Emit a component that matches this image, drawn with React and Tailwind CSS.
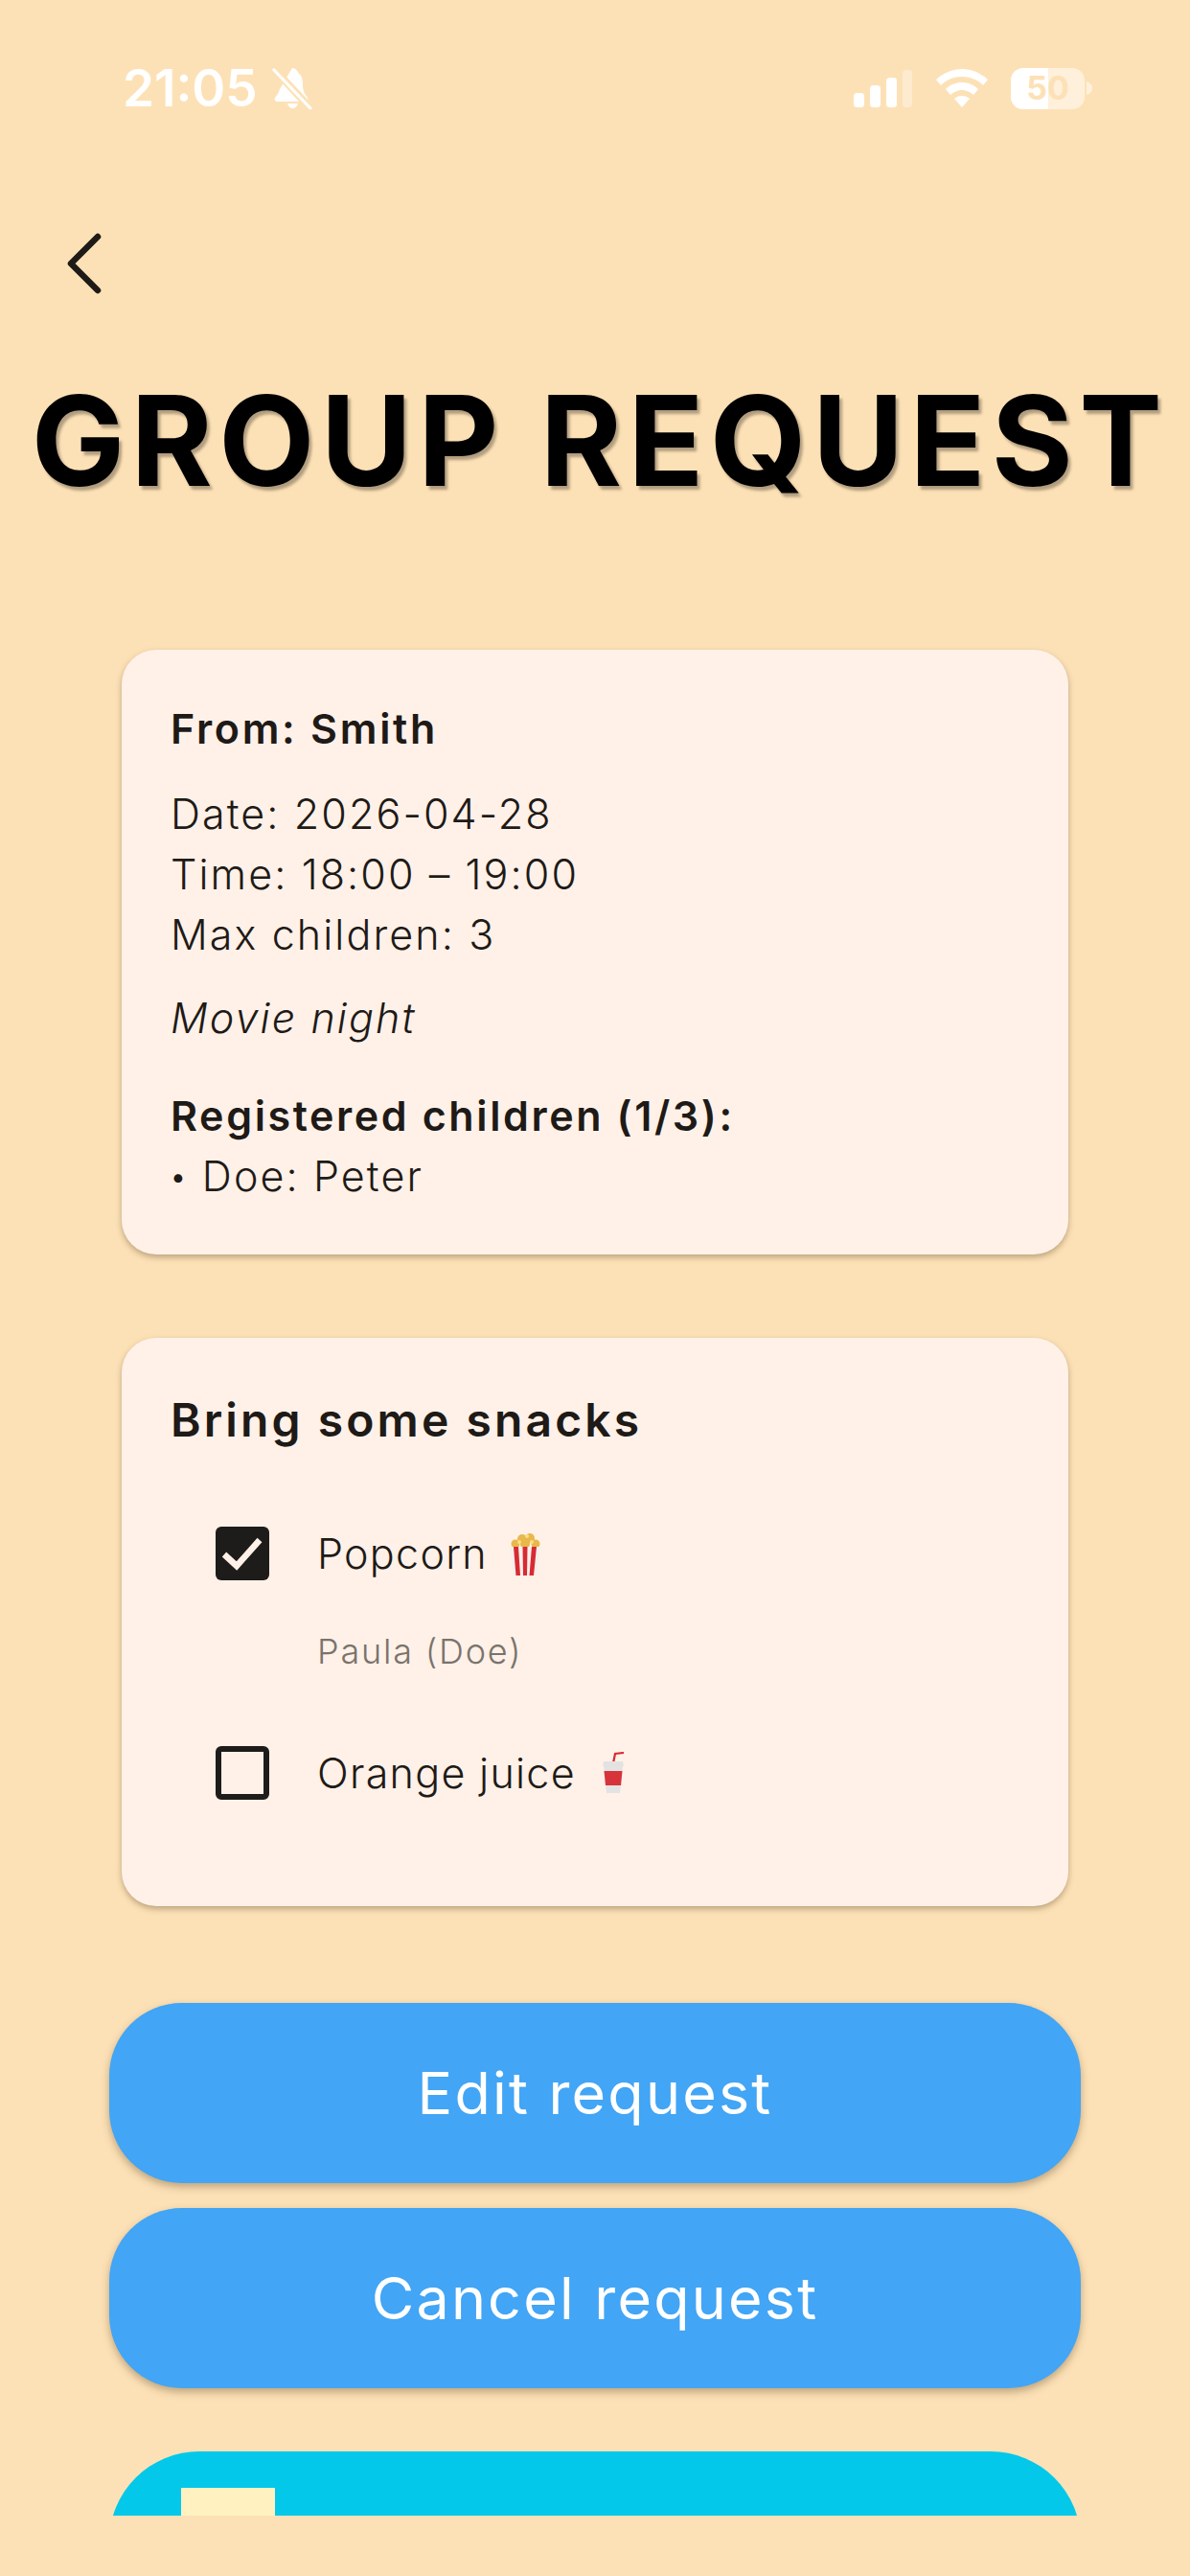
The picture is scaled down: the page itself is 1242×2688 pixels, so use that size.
const FONT = "font-['Inter','Noto_Sans',sans-serif]"

function BellOff() {
  return (
    <svg width="44" height="44" viewBox="0 0 44 44" className="ml-[14px]">
      <path fill="#fff" d="M22 1c3 0 6 3 7 6 3 2 4 6 4 11 0 6 1 9 5 14 1 2 0 4-2 4H7c-3 0-4-2-3-4 2-3 4-5 5-9z" />
      <path fill="#fff" d="M17 38h11c-1 3-3 5-5.500 5S18 41 17 38z" />
      <path stroke="#fde1b6" strokeWidth="8" d="M2 1l40 43" />
      <path stroke="#fff" strokeWidth="3.200" strokeLinecap="round" d="M3 3l38 40" />
    </svg>
  )
}

function Signal() {
  return (
    <svg width="62" height="39" viewBox="0 0 62 39">
      <rect x="0" y="24" width="11" height="15" rx="3.500" fill="#fff" />
      <rect x="17" y="16" width="11" height="23" rx="3.500" fill="#fff" />
      <rect x="34" y="8" width="11" height="31" rx="3.500" fill="#fff" />
      <rect x="51" y="0" width="10" height="39" rx="3.500" fill="#fff" fillOpacity="0.35" />
    </svg>
  )
}

function Wifi() {
  return (
    <svg width="54" height="40" viewBox="0 0 54 40" className="ml-[24px]">
      <path fill="#fff" d="M27 0c10 0 19 4 27 11l-5 6C43 11 35 8 27 8S11 11 5 17l-5-6C8 4 17 0 27 0z" />
      <path fill="#fff" d="M27 14c6 0 12 2 17 7l-5 6c-3-3-8-5-12-5s-9 2-12 5l-5-6c5-5 11-7 17-7z" />
      <path fill="#fff" d="M27 28c3 0 6 1 8 3l-8 9-8-9c2-2 5-3 8-3z" />
    </svg>
  )
}

function Battery() {
  return (
    <div className="ml-[24px] flex items-center">
      <div className="relative w-[77px] h-[43px] rounded-[13px] overflow-hidden bg-white/50 flex">
        <div className="w-[39px] h-full bg-white" />
        <span className="absolute inset-0 flex items-center justify-center text-[34px] leading-none font-bold text-[#fde1b6]">50</span>
      </div>
      <svg width="8" height="14" viewBox="0 0 8 14" className="ml-[1px]">
        <path fill="#fff" fillOpacity="0.5" d="M1 0c3 1 6 3 6 7s-3 6-6 7z" />
      </svg>
    </div>
  )
}

function Popcorn() {
  return (
    <svg width="36" height="46" viewBox="0 0 36 46" className="ml-[21px] mt-[2px]">
      <g fill="#e8b84a">
        <circle cx="8" cy="12" r="4.500" />
        <circle cx="15" cy="7" r="5" />
        <circle cx="23" cy="6" r="5" />
        <circle cx="29" cy="12" r="4.500" />
        <circle cx="18" cy="12" r="5" />
      </g>
      <g fill="#f9dd8a">
        <circle cx="12" cy="10" r="2" />
        <circle cx="20" cy="4" r="2" />
        <circle cx="25" cy="10" r="2" />
      </g>
      <path fill="#f5f0ec" d="M2 15h32l-4 30H6z" />
      <path fill="#d92a32" d="M6 15h5l2 30H8.500zM15.500 15h5l-.5 30h-4zM25 15h5l-3 30h-4.500z" />
    </svg>
  )
}

function Cup() {
  return (
    <svg width="26" height="44" viewBox="0 0 26 44" className="ml-[26px]">
      <path stroke="#d92a32" strokeWidth="2.200" fill="none" d="M13 12l2-10 9-1" />
      <path fill="#e4e2e0" d="M3 10h20l1 5H2z" />
      <path fill="#e3e3e3" d="M3 15h20l-3 28H6z" />
      <path fill="#d7333a" d="M3.500 20h19l-1.500 15H5z" />
    </svg>
  )
}

function Checkbox({ checked }) {
  if (checked) {
    return (
      <div className="w-[56px] h-[56px] shrink-0 rounded-[6px] bg-[#1e1c1a] flex items-center justify-center">
        <svg width="46" height="38" viewBox="0 0 46 38">
          <path d="M4 20l13 12L41 5" fill="none" stroke="#fff1e8" strokeWidth="6.500" />
        </svg>
      </div>
    )
  }
  return <div className="w-[56px] h-[56px] shrink-0 rounded-[6px] border-[6px] border-[#1e1c1a]" />
}

function Card({ children, className }) {
  return (
    <div className={`w-[988px] bg-[#fff1e8] rounded-[36px] shadow-[0_3px_6px_rgba(70,50,20,0.35)] text-[#1e1a17] ${className}`}>
      {children}
    </div>
  )
}

function ActionButton({ label }) {
  return (
    <div className="w-[1014px] h-[188px] rounded-[76px] bg-[#42a5f5] shadow-[0_4px_8px_rgba(70,50,20,0.35)] flex items-center justify-center text-white text-[61px] tracking-[2.200px] leading-none">
      {label}
    </div>
  )
}

export default function App() {
  return (
    <div className={`w-[1242px] h-[2688px] bg-[#fde1b6] overflow-hidden ${FONT}`}>
      <div className="h-[2625px] overflow-hidden flex flex-col">

        {/* status bar */}
        <div className="flex items-center h-[44px] mt-[70px] pl-[128px] pr-[101px] text-white">
          <span className="text-[53px] leading-none font-semibold">21:05</span>
          <BellOff />
          <span className="flex-1" />
          <Signal />
          <Wifi />
          <Battery />
        </div>

        {/* back */}
        <svg width="40" height="64" viewBox="0 0 40 64" className="ml-[68px] mt-[129px] shrink-0">
          <path d="M34 4L6 32l28 28" fill="none" stroke="#1e1a17" strokeWidth="6.500" strokeLinecap="round" strokeLinejoin="round" />
        </svg>

        <h1 className="mt-[83px] pl-[10px] text-center text-[130px] leading-[140px] font-bold tracking-[6.300px] text-black [text-shadow:3px_4px_3px_rgba(0,0,0,0.3)] whitespace-nowrap">
          GROUP REQUEST
        </h1>

        <div className="mt-[148px] flex flex-col items-center">
          <Card className="h-[631px] pt-[51px] px-[51px] text-[43px] leading-[63px] tracking-[2.100px] font-[350]">
            <div className="font-semibold tracking-[2.700px]">From: Smith</div>
            <div className="mt-[26px]">Date: 2026-04-28</div>
            <div>Time: 18:00 – 19:00</div>
            <div>Max children: 3</div>
            <div className="mt-[24px] italic">Movie night</div>
            <div className="mt-[39px] font-semibold tracking-[2.600px]">Registered children (1/3):</div>
            <div className="flex items-center h-[63px]">
              <span className="text-[28px] leading-none font-normal mr-[15px]">•</span>
              <span>Doe: Peter</span>
            </div>
          </Card>

          <Card className="mt-[87px] h-[593px] pt-[50px] px-[51px] text-[43px] tracking-[1.300px] font-[350]">
            <div className="text-[48px] leading-[72px] font-semibold tracking-[3.100px]">Bring some snacks</div>
            <div className="mt-[75px] ml-[47px] flex items-center h-[56px]">
              <Checkbox checked />
              <span className="ml-[50px] leading-none">Popcorn</span>
              <Popcorn />
            </div>
            <div className="mt-[53px] ml-[153px] text-[36px] leading-[42px] tracking-[1.800px] text-[#7a736d]">Paula (Doe)</div>
            <div className="mt-[78px] ml-[47px] flex items-center h-[56px]">
              <Checkbox />
              <span className="ml-[50px] leading-none">Orange juice</span>
              <Cup />
            </div>
          </Card>

          <div className="mt-[101px] flex flex-col gap-[26px]">
            <ActionButton label="Edit request" />
            <ActionButton label="Cancel request" />
          </div>

          <div className="mt-[66px] w-[1014px] h-[300px] rounded-[94px] bg-[#03c8ea] pt-[38px] pl-[75px]">
            <div className="w-[98px] h-[98px] bg-[#fff2c0]" />
          </div>
        </div>
      </div>
    </div>
  )
}
